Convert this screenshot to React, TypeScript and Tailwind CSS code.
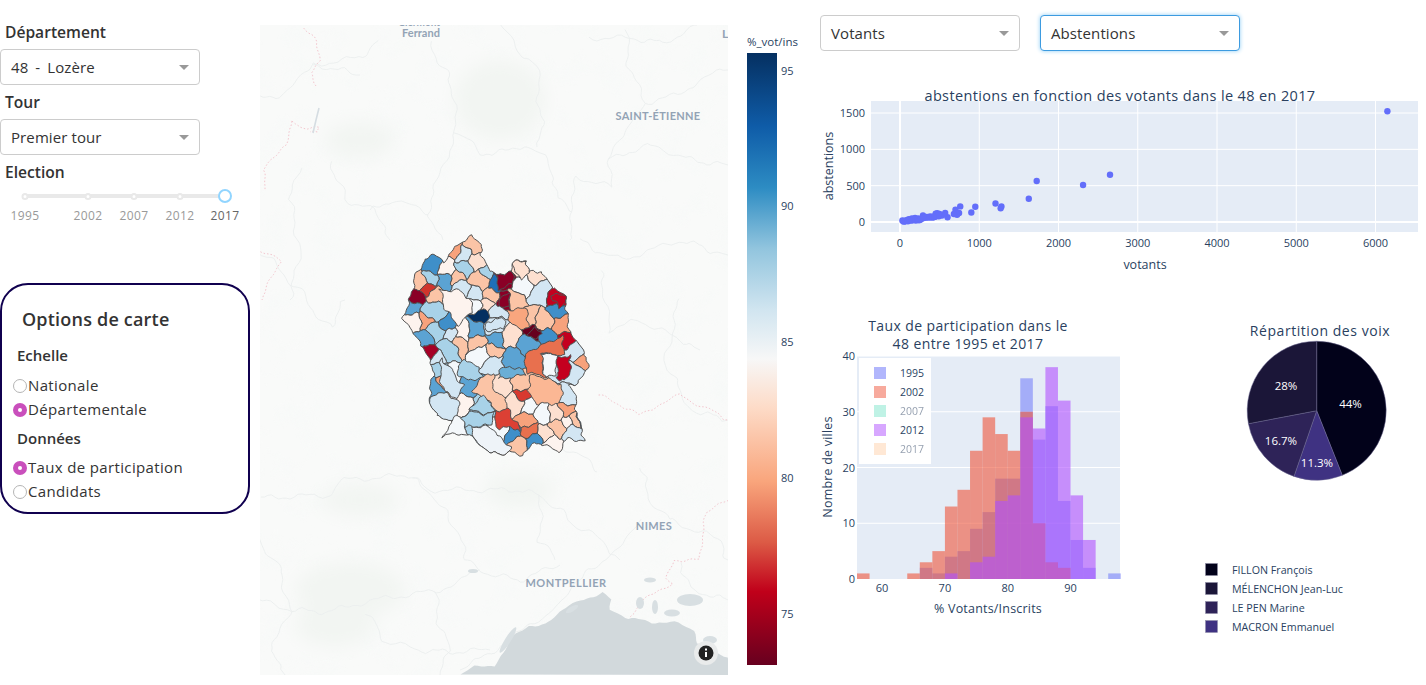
import React from "react";

type Seed = [number, number, number, string];
const DR = "#8a0026", RD = "#c4001f", OR = "#e8704e", SA = "#f7a27c", PE = "#fbc4a6", PL = "#fde0d0", WH = "#fdf3ee", W2 = "#f4f8fb", LB = "#d3e6f3", MB = "#a8d2e8", BL = "#5ba3d3", B2 = "#3f8fc9", B3 = "#1f6fb8", NV = "#053061";

const seeds: Seed[] = [
  [115,105,14,B2],[150,150,10,BL],[155,115,14,WH],[178,60,8,SA],[205,75,10,LB],[240,45,12,PE],[250,95,14,PL],[205,115,10,MB],[185,140,10,PE],[255,150,18,PE],[270,128,8,MB],[300,165,10,B3],[330,150,18,DR],[375,120,12,PL],[385,165,20,W2],[415,140,12,PL],[430,185,14,LB],[490,205,14,RD],[325,212,12,DR],[290,195,12,PE],[360,205,10,PE],[240,190,12,LB],[200,175,10,LB],[105,145,8,MB],[75,155,10,PE],[102,178,5,"#d0352d"],[120,195,10,PE],[62,200,6,DR],[48,235,10,BL],[115,245,18,MB],[95,270,8,SA],[50,275,16,WH],[155,285,10,B2],[125,305,14,MB],[90,330,12,BL],[105,365,7,"#a50026"],[165,312,8,LB],[160,355,16,MB],[205,305,10,WH],[190,340,5,PE],[240,300,10,BL],[262,255,5,NV],[243,225,6,W2],[275,225,7,PL],[305,245,10,LB],[300,285,16,LB],[305,330,10,BL],[295,362,10,PE],[245,340,8,PE],[260,368,10,W2],[340,320,8,PL],[410,265,8,PE],[442,275,14,PE],[490,240,5,B2],[505,280,10,SA],[420,310,7,"#67001f"],[405,345,16,BL],[450,322,8,B2],[520,335,8,RD],[540,365,16,LB],[564,385,6,SA],[530,425,8,LB],[350,390,14,BL],[300,400,10,LB],[125,385,8,LB],[165,440,14,W2],[130,420,8,MB],[120,470,8,BL],[145,452,4,SA],[225,465,10,BL],[320,462,12,PL],[380,460,12,PE],[385,495,6,"#d8392f"],[520,500,14,LB],[260,530,14,MB],[210,530,10,WH],[240,570,20,MB],[180,590,12,W2],[365,520,10,PL],[320,605,7,W2],[350,615,6,B2],[365,645,8,PE],[400,570,8,SA],[410,600,6,OR],[440,555,9,W2],[450,610,8,PL],[490,590,10,PE],[515,540,6,SA],[540,570,6,PE],[560,565,3,B2],[530,605,7,LB],[470,645,10,WH],[420,630,4,B2],[400,530,8,W2],[485,555,6,PL],[520,575,5,WH],
];

const outlineRaw: [number, number][] = [[232,18],[258,40],[258,70],[275,110],[305,135],[350,125],[358,95],[395,90],[400,125],[440,125],[470,170],[510,195],[515,245],[525,310],[555,345],[575,385],[578,420],[550,460],[520,465],[550,505],[535,540],[550,555],[568,635],[520,625],[490,665],[440,640],[420,640],[385,675],[345,665],[320,675],[270,660],[230,620],[190,610],[145,618],[170,570],[130,560],[105,520],[105,480],[115,440],[110,400],[70,330],[25,265],[50,190],[60,140],[90,85],[120,75],[145,95],[170,65],[195,40]];

const majors: { c: string; p: [number, number][] }[] = [
  { c: OR, p: [[385,410],[400,362],[432,350],[470,330],[502,320],[508,372],[482,382],[470,365],[445,370],[440,400],[452,440],[402,428]] },
  { c: W2, p: [[440,375],[470,366],[490,395],[478,440],[452,438],[442,400]] },
  { c: RD, p: [[482,385],[525,375],[527,420],[512,452],[480,445],[492,420]] },
  { c: "#fbb794", p: [[405,435],[452,445],[500,462],[500,510],[490,522],[420,520],[400,482]] },
  { c: PE, p: [[235,480],[255,442],[295,430],[296,490],[335,500],[335,540],[298,545],[285,510],[250,500]] },
  { c: LB, p: [[108,505],[125,485],[150,490],[190,510],[190,558],[170,572],[130,560],[105,522]] },
  { c: LB, p: [[140,385],[170,420],[205,470],[190,505],[150,488],[135,440]] },
  { c: WH, p: [[135,182],[190,180],[226,210],[232,250],[190,285],[152,240]] },
  { c: "#eef3f8", p: [[235,590],[282,590],[345,650],[345,665],[320,675],[270,660],[232,620]] },
  { c: "#dc4034", p: [[296,545],[335,535],[366,578],[376,606],[345,590],[310,597]] },
  { c: MB, p: [[208,385],[226,402],[252,410],[262,440],[220,452],[190,432],[185,410]] },
  { c: "#6aaed6", p: [[312,420],[342,410],[382,420],[396,432],[350,442],[310,446]] },
  { c: "#f9a67e", p: [[336,240],[395,235],[402,292],[370,296],[340,270]] },
  { c: LB, p: [[270,280],[300,265],[332,270],[332,292],[300,302],[275,300]] },
  { c: MB, p: [[225,540],[262,495],[290,520],[295,548],[262,550]] },
  { c: MB, p: [[198,565],[225,545],[262,552],[292,548],[295,585],[238,590],[212,590]] },
  { c: "#8a0026", p: [[305,135],[350,125],[357,160],[335,170],[315,180],[305,160]] },
  { c: "#c4001f", p: [[468,195],[512,195],[510,215],[495,232],[472,212]] },
  { c: "#67001f", p: [[400,318],[418,292],[445,310],[430,322],[408,322]] },
  { c: "#8a0026", p: [[312,200],[340,192],[345,228],[322,236],[310,222]] },
  { c: PL, p: [[355,95],[395,92],[402,130],[378,145],[360,130]] },
];

const warp = ([x, y]: [number, number]): [number, number] => [
  x + 3.5 * Math.sin(y / 9 + x / 31) + 2 * Math.sin(y / 4.3),
  y + 3.5 * Math.sin(x / 8 + y / 29) + 2 * Math.sin(x / 3.7),
];
const roughen = (poly: [number, number][]) => {
  const out: string[] = [];
  poly.forEach((a, i) => {
    const b = poly[(i + 1) % poly.length];
    const n = Math.max(1, Math.ceil(Math.hypot(b[0] - a[0], b[1] - a[1]) / 7));
    for (let k = 0; k < n; k++) {
      const t = k / n;
      const w = warp([a[0] + (b[0] - a[0]) * t, a[1] + (b[1] - a[1]) * t]);
      out.push(w[0].toFixed(1) + "," + w[1].toFixed(1));
    }
  });
  return out.join(" ");
};
const wiggle = (s: string, amp = 1) => {
  const pts = s.split(" ").map((p) => p.split(",").map(Number));
  const out: string[] = [];
  pts.forEach((a, i) => {
    if (i === pts.length - 1) { out.push(a.join(",")); return; }
    const b = pts[i + 1];
    const n = Math.max(1, Math.ceil(Math.hypot(b[0] - a[0], b[1] - a[1]) / 4));
    for (let k = 0; k < n; k++) {
      const x = a[0] + (b[0] - a[0]) * (k / n), y = a[1] + (b[1] - a[1]) * (k / n);
      const dx = amp * (2.2 * Math.sin(y / 7 + x / 19) + 1.1 * Math.sin(y / 2.7));
      const dy = amp * (2.2 * Math.sin(x / 6 + y / 17) + 1.1 * Math.sin(x / 2.3));
      out.push((x + dx).toFixed(1) + "," + (y + dy).toFixed(1));
    }
  });
  return out.join(" ");
};

const cell = (s: Seed) => {
  let poly: [number, number][] = [[0,0],[600,0],[600,705],[0,705]];
  const K = 1.4;
  for (const o of seeds) {
    if (o === s) continue;
    const nx = 2 * (o[0] - s[0]);
    const ny = 2 * (o[1] - s[1]);
    const c = o[0] ** 2 + o[1] ** 2 - s[0] ** 2 - s[1] ** 2 - K * o[2] ** 2 + K * s[2] ** 2;
    const next: [number, number][] = [];
    poly.forEach((a, i) => {
      const b = poly[(i + 1) % poly.length];
      const da = nx * a[0] + ny * a[1] - c;
      const db = nx * b[0] + ny * b[1] - c;
      if (da <= 0) next.push(a);
      if (da < 0 !== db < 0) {
        const t = da / (da - db);
        next.push([a[0] + (b[0] - a[0]) * t, a[1] + (b[1] - a[1]) * t]);
      }
    });
    poly = next;
    if (!poly.length) break;
  }
  return poly;
};

const cells = seeds.map((s) => ({ color: s[3], poly: cell(s) })).filter((c) => c.poly.length > 2).map((c) => ({ color: c.color, pts: roughen(c.poly) }));
const majorCells = majors.map((m) => ({ color: m.c, pts: roughen(m.p) }));
const outline = roughen(outlineRaw);

const roads = [
  "433,43 437,60 450,77 453,97 457,130 443,163 430,200 427,213 443,240",
  "457,132 480,152 493,155 527,145 543,157 555,177 557,200 572,212",
  "503,27 517,50 537,67 540,110 543,133 537,147",
  "627,30 627,57 635,83 647,103 627,127 610,160 610,187 577,177 570,197 573,217 570,240",
  "590,38 627,38 663,43 697,25",
  "647,103 680,95 710,75 728,70",
  "260,98 280,95 313,65 340,70 360,75",
  "377,38 360,57 313,65",
  "610,160 650,145 690,160 728,165",
  "330,160 345,200 375,210 390,240",
  "300,170 290,200 300,250 290,300",
  "427,213 395,200 370,210",
  "577,240 620,260 680,240 728,255",
  "260,498 330,495 345,480 410,475 437,500 460,535 466,560 490,575 520,580 540,573 560,565",
  "410,475 430,490 520,490 540,495 570,520 600,540 620,560",
  "540,495 540,540 555,560",
  "640,465 650,500 670,520 720,540 728,560",
  "640,520 620,550 590,570 570,590 540,620 495,650 460,670",
  "260,600 290,610 330,612 375,600 440,590 480,570",
  "435,590 440,630 450,650 440,675",
  "365,612 385,640 415,650 450,652 490,650",
  "260,540 280,570 290,610 270,650 285,675",
  "680,560 690,590 728,600",
  "260,250 290,280 330,330 345,300",
  "600,270 610,330 640,320 700,350",
  "600,470 570,450 540,440 500,450",
  "680,300 665,360 690,410 728,420",
];
const borders = [
  "303,27 318,43 320,60 310,73 316,86",
  "290,122 300,127 320,128 319,133 310,132",
  "290,122 288,145 263,170 265,190",
  "728,500 707,513 700,550 700,560 673,560 667,577 673,583 643,600 630,617",
  "598,395 620,405 640,415 680,395 728,420",
  "262,250 280,262 262,300",
];
const forests: [number, number, number, number][] = [
  [350,590,55,28],[335,625,40,22],[360,500,40,16],[500,100,45,40],[520,490,35,18],[360,140,35,18],
];

const rdbu: [string, string][] = [["0%","#053061"],["12%","#0f5ca8"],["22%","#2d8cc3"],["32%","#92c5de"],["42%","#d1e5f0"],["50%","#f7f7f7"],["58%","#fddbc7"],["70%","#f9a57c"],["80%","#dc5a45"],["88%","#c0001a"],["100%","#67001f"]];

const TXT = "#2a3f5f";
const FF = "'Open Sans', 'DejaVu Sans', sans-serif";

function Select({ value, focused, wide }: { value: string; focused?: boolean; wide?: boolean }) {
  return (
    <div className={`flex h-[36px] w-[200px] items-center justify-between rounded-[4px] border bg-white pl-[10px] pr-[10px] text-[15px] tracking-[0.1px] text-[#333] ${wide ? "[word-spacing:3px]" : ""} ${focused ? "border-[#3d9be0] shadow-[0_0_4px_#8ecdf5]" : "border-[#ccc]"}`}>
      <span>{value}</span>
      <span className="h-0 w-0 border-x-[5px] border-t-[5px] border-x-transparent border-t-[#999]" />
    </div>
  );
}

function Radio({ label, on }: { label: string; on?: boolean }) {
  return (
    <div className="flex h-[24px] items-center pl-[11px] text-[15px] tracking-[0.35px] text-[#333]">
      <span className={`mr-px flex h-[14px] w-[14px] shrink-0 items-center justify-center rounded-full ${on ? "bg-[#c94fbc]" : "border border-[#b5b5b5] bg-white"}`}>
        {on && <span className="h-[4px] w-[4px] rounded-full bg-white" />}
      </span>
      <span className="pb-[2px] leading-none">{label}</span>
    </div>
  );
}

function Slider() {
  const marks = [{ y: "1995", p: 0 }, { y: "2002", p: 31.5 }, { y: "2007", p: 54.5 }, { y: "2012", p: 77.5 }, { y: "2017", p: 100 }];
  return (
    <div className="relative ml-[25px] h-[44px] w-[200px]">
      <div className="absolute left-0 right-0 top-[10px] h-[4px] rounded-full bg-[#e9e9e9]" />
      {marks.map((m, i) => (
        <React.Fragment key={m.y}>
          {i < 4 ? (
            <span className="absolute top-[8.5px] h-[7px] w-[7px] -translate-x-1/2 rounded-full border-2 border-[#e9e9e9] bg-white" style={{ left: `${m.p}%` }} />
          ) : (
            <span className="absolute top-[5px] h-[14px] w-[14px] -translate-x-1/2 rounded-full border-2 border-[#91d5ff] bg-white" style={{ left: `${m.p}%` }} />
          )}
          <span className={`absolute top-[23px] -translate-x-1/2 text-[12px] tracking-[0.4px] ${i === 4 ? "text-[#666]" : "text-[#999]"}`} style={{ left: `${m.p}%` }}>{m.y}</span>
        </React.Fragment>
      ))}
    </div>
  );
}

function LeftColumn() {
  return (
    <div className="w-[260px] shrink-0 pt-[21px]">
      <div className="ml-[5px] h-[24px] text-[15.6px] font-semibold leading-[22px] text-[#333]">Département</div>
      <div className="mt-[4px]"><Select value="48 - Lozère" wide /></div>
      <div className="ml-[5px] mt-[4px] h-[30px] text-[15.6px] font-semibold leading-[26px] text-[#333]">Tour</div>
      <Select value="Premier tour" />
      <div className="ml-[5px] mt-[4px] h-[25px] text-[15.6px] font-semibold leading-[26px] text-[#333]">Election</div>
      <Slider />
      <div className="mt-[55px] h-[231px] w-[250px] rounded-[28px] border-2 border-[#10004f] pt-[21px]">
        <div className="ml-[20px] text-[18px] font-semibold leading-[26px] tracking-[0.2px] text-[#333]">Options de carte</div>
        <div className="ml-[15px] mt-[12px] h-[26px] text-[15px] font-semibold leading-[22px] text-[#333]">Echelle</div>
        <div className="mt-[4px]"><Radio label="Nationale" /><Radio label="Départementale" on /></div>
        <div className="ml-[15px] mt-[4px] h-[30px] text-[15px] font-semibold leading-[24px] text-[#333]">Données</div>
        <div><Radio label="Taux de participation" on /><Radio label="Candidats" /></div>
      </div>
    </div>
  );
}

function MapLayer() {
  return (
    <div className="relative mt-[25px] h-[650px] w-[468px] shrink-0 overflow-hidden bg-[#f9faf9]">
      <svg width={468} height={650} viewBox="260 25 468 650" className="block" style={{ fontFamily: "Lato, 'Open Sans', sans-serif" }}>
        <defs>
          <filter id="soft"><feGaussianBlur stdDeviation="9" /></filter>
          <filter id="speckle" x="0" y="0" width="100%" height="100%">
            <feTurbulence type="fractalNoise" baseFrequency="0.035" numOctaves="3" seed="7" />
            <feColorMatrix type="matrix" values="0 0 0 0 0.93  0 0 0 0 0.95  0 0 0 0 0.94  2.6 0 0 0 -1.25" />
          </filter>
          <clipPath id="dept"><polygon points={outline} /></clipPath>
        </defs>
        <rect x="260" y="25" width="468" height="650" filter="url(#speckle)" opacity={0.75} />
        <g filter="url(#soft)" fill="#f2f5f2">
          {forests.map((f, i) => <ellipse key={i} cx={f[0]} cy={f[1]} rx={f[2]} ry={f[3]} />)}
        </g>
        <g fill="none" stroke="#ebeeee" strokeWidth={0.9} strokeLinejoin="round">
          {roads.map((r, i) => <polyline key={i} points={wiggle(r)} />)}
        </g>
        <g fill="none" stroke="#f3c6ce" strokeWidth={1} strokeDasharray="1.5 2">
          {borders.map((r, i) => <polyline key={i} points={wiggle(r, 0.6)} />)}
        </g>
        <polyline points="319,108 316,120 313,133" fill="none" stroke="#d5dde2" strokeWidth={1.6} />
        <polygon points={wiggle("460,675 473,667 493,665 503,653 513,637 530,627 547,623 560,613 580,600 603,593 612,600 610,610 627,618 653,622 680,623 693,630 697,643 728,657 728,675", 0.5)} fill="#d2d9dc" />
        <g fill="#d8dfe2">
          <ellipse cx="508" cy="640" rx="15" ry="3" transform="rotate(-58 508 640)" />
          <ellipse cx="690" cy="600" rx="13" ry="6" />
          <ellipse cx="650" cy="580" rx="6" ry="2.5" />
          <ellipse cx="672" cy="613" rx="8" ry="3.5" />
          <ellipse cx="572" cy="609" rx="7" ry="2.5" transform="rotate(-30 572 609)" />
          <ellipse cx="473" cy="571" rx="5" ry="2" />
          <ellipse cx="640" cy="603" rx="4" ry="6" />
          <ellipse cx="655" cy="607" rx="3" ry="7" />
          <ellipse cx="710" cy="640" rx="7" ry="4" />
        </g>
        <g fill="#93a3b5" fontWeight={700} textAnchor="middle" fontSize={11}>
          <text x="421" y="26" fontSize={10}>Clermont-</text>
          <text x="421" y="37" fontSize={11}>Ferrand</text>
          <text x="658" y="120" fontSize={11} letterSpacing={0.3}>SAINT-ÉTIENNE</text>
          <text x="654" y="530" letterSpacing={0.4}>NIMES</text>
          <text x="566" y="587" letterSpacing={0.5}>MONTPELLIER</text>
          <text x="725" y="38" fontSize={12}>L</text>
        </g>
        <g transform="translate(395 230) scale(0.3333)">
          <g clipPath="url(#dept)" stroke="#505050" strokeWidth={3} strokeLinejoin="round">
            {cells.map((c, i) => <polygon key={i} points={c.pts} fill={c.color} />)}
            {majorCells.map((c, i) => <polygon key={i} points={c.pts} fill={c.color} />)}
          </g>
          <polygon points={outline} fill="none" stroke="#505050" strokeWidth={3} />
        </g>
        <circle cx="706" cy="653" r="12" fill="#e9ebeb" />
        <circle cx="706" cy="653" r="7.5" fill="#222" />
        <rect x="705" y="652" width="2" height="5" fill="#fff" />
        <rect x="705" y="648.5" width="2" height="2" fill="#fff" />
      </svg>
    </div>
  );
}

function ColorBar() {
  const ticks: [string, number][] = [["95",71],["90",206],["85",342],["80",478],["75",614]];
  return (
    <svg width={92} height={685} viewBox="728 0 92 685" className="block shrink-0" style={{ fontFamily: FF }}>
      <defs>
        <linearGradient id="rb" x1="0" y1="0" x2="0" y2="1">
          {rdbu.map(([o, c]) => <stop key={o} offset={o} stopColor={c} />)}
        </linearGradient>
      </defs>
      <text x="747" y="46" fontSize={11.5} fill={TXT}>%_vot/ins</text>
      <rect x="747" y="53" width="30" height="612" fill="url(#rb)" />
      {ticks.map(([t, y]) => <text key={t} x="781" y={y + 4} fontSize={11} fill={TXT}>{t}</text>)}
    </svg>
  );
}

const sPts: [number, number][] = [[6150,1525],[2650,650],[2310,510],[1725,565],[1625,320],[1205,255],[1280,215],[1270,190],[950,210],[900,130],[760,215],[700,170],[745,125],[720,100],[680,110],[600,65],[570,125],[530,90],[490,80],[470,120],[450,115],[440,70],[410,60],[380,75],[340,70],[320,60],[290,90],[270,45],[250,30],[230,50],[210,40],[190,55],[170,35],[150,50],[130,30],[110,40],[95,20],[80,25],[60,10],[50,5],[40,15],[30,20],[70,15],[100,10],[120,25],[140,20],[160,25],[180,30],[200,20],[220,30],[240,25],[260,35],[500,110],[480,90],[420,75],[360,60],[300,55]];

function Scatter() {
  const X0 = 820, Y0 = 85;
  const sx = (v: number) => 900 + (v * 475.5) / 6000;
  const sy = (v: number) => 222 - (v * 109) / 1500;
  return (
    <svg width={606} height={200} viewBox={`${X0} ${Y0} 606 200`} className="block" style={{ fontFamily: FF }}>
      <rect x="871" y="101" width="547" height="131" fill="#e5ecf6" />
      {[1000,2000,3000,4000,5000,6000].map((v) => <line key={v} x1={sx(v)} x2={sx(v)} y1="101" y2="232" stroke="#fff" />)}
      {[500,1000,1500].map((v) => <line key={v} x1="871" x2="1418" y1={sy(v)} y2={sy(v)} stroke="#fff" />)}
      <line x1={sx(0)} x2={sx(0)} y1="101" y2="232" stroke="#fff" strokeWidth={2} />
      <line x1="871" x2="1418" y1={sy(0)} y2={sy(0)} stroke="#fff" strokeWidth={2} />
      {sPts.map(([a, b], i) => <circle key={i} cx={sx(a)} cy={sy(b)} r={3.2} fill="#636efa" />)}
      <text x="1120" y="101" textAnchor="middle" fontSize={14.5} fill={TXT} letterSpacing={0.36}>abstentions en fonction des votants dans le 48 en 2017</text>
      {[0,1000,2000,3000,4000,5000,6000].map((v) => <text key={v} x={sx(v)} y="247" textAnchor="middle" fontSize={11} fill={TXT}>{v}</text>)}
      {[0,500,1000,1500].map((v) => <text key={v} x="865" y={sy(v) + 4} textAnchor="end" fontSize={11} fill={TXT}>{v}</text>)}
      <text x="1145" y="269" textAnchor="middle" fontSize={12.5} fill={TXT}>votants</text>
      <text transform="translate(833 166) rotate(-90)" textAnchor="middle" fontSize={12.5} fill={TXT}>abstentions</text>
    </svg>
  );
}

const hist: { c: string; o: number; d: Record<number, number> }[] = [
  { c: "#636efa", o: 0.5, d: { 66:2,68:1,70:4,72:5,74:9,76:12,78:18,80:18,82:36,84:25,86:31,88:14,90:7,92:2,96:1 } },
  { c: "#EF553B", o: 0.6, d: { 56:1,64:1,66:3,68:5,70:13,72:16,74:23,76:29,78:26,80:23,82:30,84:10,86:3,88:2 } },
  { c: "#b050ff", o: 0.6, d: { 70:1,74:3,76:4,78:14,80:15,82:29,84:27,86:38,88:32,90:15,92:7 } },
];

function Histogram() {
  const sx = (v: number) => 857 + (v - 56) * 6.28;
  const sy = (v: number) => 579 - v * 5.575;
  const leg: [string, string, boolean][] = [["1995","#636efa",true],["2002","#EF553B",true],["2007","#00cc96",false],["2012","#b050ff",true],["2017","#FFA15A",false]];
  return (
    <svg width={320} height={310} viewBox="820 310 320 310" className="block shrink-0" style={{ fontFamily: FF }}>
      <text x="968" y="331" textAnchor="middle" fontSize={14} fill={TXT} letterSpacing={0.4}>Taux de participation dans le</text>
      <text x="968" y="349" textAnchor="middle" fontSize={14} fill={TXT} letterSpacing={0.4}>48 entre 1995 et 2017</text>
      <rect x="857" y="356" width="263" height="223" fill="#e5ecf6" />
      {[10,20,30,40].map((v) => <line key={v} x1="857" x2="1120" y1={sy(v)} y2={sy(v)} stroke="#fff" />)}
      {hist.map((h) => Object.entries(h.d).map(([k, v]) => (
        <rect key={h.c + k} x={sx(+k)} y={sy(v)} width={12.56} height={v * 5.575} fill={h.c} opacity={h.o} />
      )))}
      <rect x="859" y="358" width="72" height="106" fill="#fff" />
      {leg.map(([y, c, on], i) => (
        <g key={y} opacity={on ? 1 : 0.5}>
          <rect x="874" y={367 + i * 19} width="12" height="12" fill={c} opacity={0.5} />
          <text x="900" y={377 + i * 19} fontSize={10.5} fill={TXT}>{y}</text>
        </g>
      ))}
      {[60,70,80,90].map((v) => <text key={v} x={sx(v)} y="592" textAnchor="middle" fontSize={11} fill={TXT}>{v}</text>)}
      {[0,10,20,30,40].map((v) => <text key={v} x="855" y={sy(v) + 4} textAnchor="end" fontSize={11} fill={TXT}>{v}</text>)}
      <text x="988" y="613" textAnchor="middle" fontSize={12.5} fill={TXT} letterSpacing={0.2}>% Votants/Inscrits</text>
      <text transform="translate(832 467) rotate(-90)" textAnchor="middle" fontSize={12.5} fill={TXT} letterSpacing={0.2}>Nombre de villes</text>
    </svg>
  );
}

function Pie() {
  const cx = 1316.7, cy = 410.7, r = 69.5;
  const parts: [number, string][] = [[44,"#02021a"],[11.3,"#3f3282"],[16.7,"#2e2358"],[28,"#1b1638"]];
  let acc = 0;
  const pt = (p: number) => [cx + r * Math.sin((p / 100) * 2 * Math.PI), cy - r * Math.cos((p / 100) * 2 * Math.PI)];
  const labels: [string, number, number][] = [["44%",1350.5,408],["11.3%",1317,467],["16.7%",1281,445],["28%",1286,390]];
  const legend: [string, string][] = [["FILLON François","#02021a"],["MÉLENCHON Jean-Luc","#1b1638"],["LE PEN Marine","#2e2358"],["MACRON Emmanuel","#3f3282"]];
  return (
    <svg width={236} height={330} viewBox="1190 310 236 330" className="block shrink-0" style={{ fontFamily: FF }}>
      <text x="1320" y="336" textAnchor="middle" fontSize={14} fill={TXT} letterSpacing={0.55}>Répartition des voix</text>
      {parts.map(([v, c]) => {
        const a = pt(acc); acc += v; const b = pt(acc);
        return <path key={c} d={`M${cx} ${cy}L${a[0]} ${a[1]}A${r} ${r} 0 ${v > 50 ? 1 : 0} 1 ${b[0]} ${b[1]}Z`} fill={c} stroke="#6a6790" strokeWidth={0.5} />;
      })}
      {labels.map(([t, x, y]) => <text key={t} x={x} y={y} textAnchor="middle" fontSize={11.5} fill="#fff">{t}</text>)}
      {legend.map(([t, c], i) => (
        <g key={t}>
          <rect x="1205.5" y={563.5 + i * 19} width="12" height="12" fill={c} stroke="#8d8ba5" strokeWidth={0.5} />
          <text x="1232" y={574 + i * 19} fontSize={10.7} fill={TXT}>{t}</text>
        </g>
      ))}
    </svg>
  );
}

function RightColumn() {
  return (
    <div className="flex w-[606px] shrink-0 flex-col">
      <div className="flex gap-[20px] pt-[15px]">
        <Select value="Votants" />
        <Select value="Abstentions" focused />
      </div>
      <div className="mt-[34px]"><Scatter /></div>
      <div className="mt-[25px] flex gap-[50px]">
        <Histogram />
        <Pie />
      </div>
    </div>
  );
}

export default function App() {
  return (
    <div className="flex h-[685px] w-[1426px] overflow-hidden bg-white" style={{ fontFamily: FF }}>
      <LeftColumn />
      <MapLayer />
      <ColorBar />
      <RightColumn />
    </div>
  );
}
